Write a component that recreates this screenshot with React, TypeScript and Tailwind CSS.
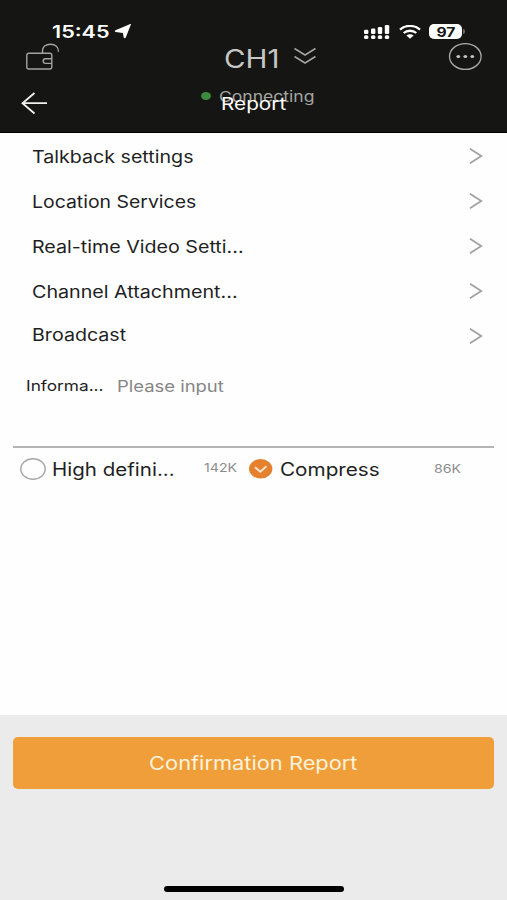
import type { ReactNode } from "react";

function Label({ className = "", children }: { className?: string; children: ReactNode }) {
  return (
    <span className={`block origin-left whitespace-nowrap leading-none ${className}`}>{children}</span>
  );
}

function StatusBar() {
  return (
    <div className="flex h-[42px] items-end pl-[52px]">
      <div className="flex h-[21px] w-[312px] items-center">
        <div className="w-[62px]">
          <Label className="mt-[2px] scale-x-[1.270] text-[17px] font-semibold text-white">15:45</Label>
        </div>
        <svg width="18" height="15" viewBox="0 0 18 15" fill="#fff">
          <path d="M16.900.600 11.800 13.600c-.4.900-1.900.900-2.100-.1L8.900 8.900 1.700 7.900C.500 7.700.400 6.700 1.500 6.200L15.700.200c.8-.3 1.500-.3 1.200.4Z" />
        </svg>
      </div>
      <div className="flex h-[21px] items-center">
        <svg width="26" height="16" viewBox="0 0 26 16" fill="#fff">
          <rect x="0" y="5.8" width="4.4" height="4.2" rx="1.3" />
          <rect x="7" y="4.6" width="4.4" height="5.4" rx="1.3" />
          <rect x="13.8" y="3" width="4.4" height="7" rx="1.3" />
          <rect x="20.8" y="1" width="4.4" height="9" rx="1.3" />
          <rect x="0" y="11.3" width="4.4" height="3.8" rx="1.5" />
          <rect x="7" y="11.3" width="4.4" height="3.8" rx="1.5" />
          <rect x="13.8" y="11.3" width="4.4" height="3.8" rx="1.5" />
          <rect x="20.8" y="11.3" width="4.4" height="3.8" rx="1.5" />
        </svg>
        <svg className="ml-[9px]" width="22" height="14" viewBox="0 0 22 14" fill="none" stroke="#fff" strokeWidth="2.3">
          <path d="M1 4.6C6.5-.3 15.5-.3 21 4.6" />
          <path d="M4.7 8c3.4-3 9.200-3 12.600 0" />
          <path d="M7.400 10.500c2-1.700 5.200-1.700 7.200 0L11 13.700Z" fill="#fff" stroke="none" />
        </svg>
        <div className="ml-[8px] flex h-[15.500px] w-[33px] items-center justify-center rounded-[5px] bg-white">
          <span className="mt-px block scale-x-[1.200] text-[13px] font-bold leading-none text-[#151613]">97</span>
        </div>
        <div className="ml-px h-[5px] w-[2px] rounded-r bg-[#6b6c69]" />
      </div>
    </div>
  );
}

function Toolbar() {
  return (
    <div className="flex h-[30px] items-center pl-[25px]">
      <svg width="36" height="28" viewBox="0 0 36 28" fill="none" stroke="#a3a4a0" strokeWidth="1.4">
        <rect x="1.800" y="10.300" width="25" height="15.700" rx="2" />
        <path d="M26.800 15.800h-6.300a2.300 2.300 0 0 0 0 4.600h6.300" />
        <path d="M17.500 10.300V8c0-4 3-6.700 8-6.700s8 3 8 7.500" />
      </svg>
      <div className="ml-[163px] w-[69px]">
        <Label className="mt-[4px] scale-x-[1.180] text-[25px] text-[#c6c7c4]">CH1</Label>
      </div>
      <svg className="-mt-[2px]" width="24" height="18" viewBox="0 0 24 18" fill="none" stroke="#a3a4a0" strokeWidth="1.500">
        <path d="m1.500 1.500 10.500 6.500L22.500 1.500M1.500 9.500 12 16l10.500-6.500" />
      </svg>
      <svg className="-mt-px ml-[131px]" width="34" height="28" viewBox="0 0 34 28">
        <ellipse cx="17.300" cy="13.500" rx="15.800" ry="12.900" fill="none" stroke="#a9aaa7" strokeWidth="1.300" />
        <g fill="#c3c4c1">
          <ellipse cx="10.300" cy="13.500" rx="1.900" ry="1.600" />
          <ellipse cx="17.300" cy="13.500" rx="1.900" ry="1.600" />
          <ellipse cx="24.300" cy="13.500" rx="1.900" ry="1.600" />
        </g>
      </svg>
    </div>
  );
}

function TitleRow() {
  return (
    <div className="relative flex h-[60px] pl-[21px]">
      <svg className="mt-[20px]" width="27" height="23" viewBox="0 0 27 23" fill="none" stroke="#f0f1ee" strokeWidth="1.800">
        <path d="M26 11.200H1.500M13.500 1 1.500 11.200 13.500 21.500" />
      </svg>
      <div className="ml-[153px] mt-[20px] h-[8px] w-[10px] rounded-[50%] bg-[#3c8b3c]" />
      <div className="ml-[8px] mt-[17px]">
        <Label className="scale-x-[1.170] text-[15px] text-[#a5a6a3]">Connecting</Label>
      </div>
      <div className="absolute left-[221px] top-[24px]">
        <Label className="scale-x-[1.220] text-[17px] text-white">Report</Label>
      </div>
    </div>
  );
}

function Chevron() {
  return (
    <svg width="14" height="17" viewBox="0 0 14 17" fill="none" stroke="#a0a0a0" strokeWidth="1.700">
      <path d="m1 .700 11.300 7.300L1 15.300" />
    </svg>
  );
}

const rows = [
  { text: "Talkback settings", style: "scale-x-[1.155] mt-[2px]" },
  { text: "Location Services", style: "scale-x-[1.143] mt-[2px]" },
  { text: "Real-time Video Setti...", style: "scale-x-[1.156] mt-[2px]" },
  { text: "Channel Attachment...", style: "scale-x-[1.158] mt-[2px]" },
  { text: "Broadcast", style: "scale-x-[1.155] -mt-[2px]" },
];

export default function App() {
  return (
    <div className="flex h-[900px] w-[507px] flex-col overflow-hidden bg-[#fefefe] font-['Inter','Liberation_Sans',sans-serif]">
      <header className="h-[133px] shrink-0 border-b border-black bg-[#151613]">
        <StatusBar />
        <Toolbar />
        <TitleRow />
      </header>
      <main className="flex-1">
        <ul className="pt-[0.500px]">
          {rows.map((r) => (
            <li key={r.text} className="flex h-[45px] items-center justify-between pl-[32px] pr-[24px]">
              <Label className={`text-[17px] text-[#1f1f1f] ${r.style}`}>{r.text}</Label>
              <Chevron />
            </li>
          ))}
        </ul>
        <div className="mx-[13px] flex h-[89px] border-b-2 border-[#b5b5b5] pl-[13px] pt-[20px]">
          <div className="w-[90.500px]">
            <Label className="scale-x-[1.190] text-[14.500px] text-[#1f1f1f]">Informa...</Label>
          </div>
          <Label className="scale-x-[1.190] text-[15.500px] text-[#858585]">Please input</Label>
        </div>
        <div className="flex h-[42px] items-center pl-[20px]">
          <svg width="26" height="22" viewBox="0 0 26 22" fill="none" stroke="#a8a8a8" strokeWidth="1.500">
            <ellipse cx="13" cy="11" rx="12.200" ry="10.200" />
          </svg>
          <div className="ml-[6px] w-[152px]">
            <Label className="mt-[2px] scale-x-[1.140] text-[18px] text-[#1f1f1f]">High defini...</Label>
          </div>
          <div className="w-[45px]">
            <Label className="mt-px scale-x-[1.230] text-[11.500px] text-[#8c8c8c]">142K</Label>
          </div>
          <svg width="24" height="20" viewBox="0 0 24 20">
            <ellipse cx="11.700" cy="9.800" rx="11.700" ry="9.700" fill="#e5812d" />
            <path d="m6 8.300 5.300 4.500 6.200-5.500" fill="none" stroke="#fbe6cf" strokeWidth="1.900" />
          </svg>
          <div className="ml-[7px] w-[154px]">
            <Label className="mt-[2px] scale-x-[1.150] text-[18px] text-[#1f1f1f]">Compress</Label>
          </div>
          <Label className="mt-[2px] scale-x-[1.230] text-[11.500px] text-[#8c8c8c]">86K</Label>
        </div>
      </main>
      <footer className="flex h-[185px] shrink-0 flex-col items-center justify-between bg-[#ebebeb] pb-[8px] pt-[22px]">
        <button className="flex h-[52px] w-[481px] items-center justify-center rounded-[5px] bg-[#ef9e3a]">
          <span className="block scale-x-[1.180] whitespace-nowrap text-[18.500px] leading-none text-[#fff3dc]">
            Confirmation Report
          </span>
        </button>
        <div className="h-[6px] w-[180px] rounded-full bg-black" />
      </footer>
    </div>
  );
}
